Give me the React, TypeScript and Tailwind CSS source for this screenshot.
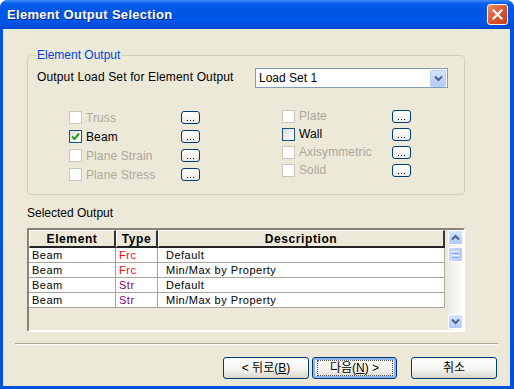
import React from "react"

const font = "font-['Liberation_Sans',Arial,sans-serif]"
const krFont = "font-['Liberation_Sans','Noto_Sans_CJK_KR',sans-serif]"

const leftItems = [
  { label: "Truss", state: "disabled" },
  { label: "Beam", state: "checked" },
  { label: "Plane Strain", state: "disabled" },
  { label: "Plane Stress", state: "disabled" },
]

const rightItems = [
  { label: "Plate", state: "disabled" },
  { label: "Wall", state: "enabled" },
  { label: "Axisymmetric", state: "disabled" },
  { label: "Solid", state: "disabled" },
]

const rows = [
  { element: "Beam", type: "Frc", desc: "Default" },
  { element: "Beam", type: "Frc", desc: "Min/Max by Property" },
  { element: "Beam", type: "Str", desc: "Default" },
  { element: "Beam", type: "Str", desc: "Min/Max by Property" },
]

function Chevron({ up = false }: { up?: boolean }) {
  return (
    <svg width="9" height="7" viewBox="0 0 9 7">
      <polyline
        points={up ? "1,5.5 4.5,2 8,5.5" : "1,1.5 4.5,5 8,1.5"}
        fill="none"
        stroke="#4D6185"
        strokeWidth="2"
      />
    </svg>
  )
}

function CheckBox({ state }: { state: string }) {
  if (state === "disabled") {
    return <div className="h-[13px] w-[13px] shrink-0 border border-[#CAC8BB] bg-white" />
  }
  return (
    <div className="flex h-[13px] w-[13px] shrink-0 items-center justify-center border border-[#1C5180] bg-[linear-gradient(135deg,#DCDCD7,#FFFFFF)]">
      {state === "checked" && (
        <svg width="9" height="9" viewBox="0 0 9 9">
          <polyline points="1,4.5 3.5,7 8,1.5" fill="none" stroke="#21A121" strokeWidth="2" />
        </svg>
      )}
    </div>
  )
}

function DotsButton() {
  return (
    <div className="flex h-[13px] w-[19px] shrink-0 items-end justify-center gap-[2px] rounded-[3px] border border-[#003C74] bg-[linear-gradient(to_bottom,#FFFFFF,#ECEBE6)] pb-[2px]">
      <div className="h-px w-px bg-black" />
      <div className="h-px w-px bg-black" />
      <div className="h-px w-px bg-black" />
    </div>
  )
}

function CheckRow({ label, state, rowH, labelW }: { label: string; state: string; rowH: string; labelW: string }) {
  return (
    <div className={`flex items-center ${rowH}`}>
      <div className={`flex items-center gap-[4px] ${labelW}`}>
        <CheckBox state={state} />
        <span className={`text-[12px] leading-none tracking-[0.1px] ${state === "disabled" ? "text-[#ACA899]" : "text-black"}`}>
          {label}
        </span>
      </div>
      <DotsButton />
    </div>
  )
}

function XPButton({ children, focused = false }: { children: React.ReactNode; focused?: boolean }) {
  return (
    <div
      className={`flex h-[22px] items-center justify-center rounded-[3px] border border-[#003C74] bg-[linear-gradient(to_bottom,#FFFFFF,#F3F2EE_60%,#D8D4CA)] text-[12px] text-black ${
        focused ? "shadow-[inset_0_0_0_2px_#8FB1EE]" : ""
      } ${krFont}`}
    >
      {focused ? (
        <div className="flex h-[16px] w-[76px] items-center justify-center border border-dotted border-[#555]">
          {children}
        </div>
      ) : (
        children
      )}
    </div>
  )
}

export default function App() {
  return (
    <div className={`h-[389px] w-[514px] bg-white ${font}`}>
      <div className="flex h-full w-full flex-col rounded-t-[8px] bg-[linear-gradient(to_bottom,#0055E5,#0050DF)]">
        {/* Title bar */}
        <div className="flex h-[29px] items-center justify-between rounded-t-[8px] bg-[linear-gradient(to_bottom,#3D8EFA_0%,#0A5EEC_12%,#0055E5_35%,#0058E8_70%,#0049D6_100%)] pl-[7px] pr-[6px]">
          <span className="text-[13px] font-bold tracking-[0.3px] text-white [text-shadow:1px_1px_0_#0C2A8A]">
            Element Output Selection
          </span>
          <div className="flex h-[21px] w-[21px] items-center justify-center rounded-[3px] border border-white bg-[linear-gradient(135deg,#EE8B66,#D9532B_55%,#C23D18)]">
            <svg width="11" height="11" viewBox="0 0 11 11">
              <path d="M1.5 1.5 L9.5 9.5 M9.5 1.5 L1.5 9.5" stroke="white" strokeWidth="2.2" strokeLinecap="square" />
            </svg>
          </div>
        </div>

        {/* Client area */}
        <div className="mb-[3px] ml-[3px] mr-[4px] flex flex-1 flex-col bg-[#ECE9D8]">
          {/* Element Output group */}
          <div className="relative ml-[24px] mt-[26px] h-[140px] w-[438px] rounded-[4px] border border-[#D0D0BF]">
            <span className="absolute left-[8px] top-[-8px] bg-[#ECE9D8] px-[1px] text-[12px] leading-[14px] text-[#0046D5]">
              Element Output
            </span>

            <div className="ml-[9px] mt-[12px] flex items-center">
              <span className="w-[218px] pb-[2px] text-[12px] tracking-[0.15px] text-black">Output Load Set for Element Output</span>
              <div className="flex h-[20px] w-[193px] items-center justify-between border border-[#7F9DB9] bg-white pl-[3px] pr-[1px]">
                <span className="text-[12px] text-black">Load Set 1</span>
                <div className="flex h-[17px] w-[16px] items-center justify-center rounded-[2px] border border-[#B9CDF6] bg-[linear-gradient(to_bottom,#D6E3FD,#B3C9F6)]">
                  <Chevron />
                </div>
              </div>
            </div>

            <div className="ml-[41px] mt-[19px] flex items-start">
              <div className="flex flex-col pt-[1px]">
                {leftItems.map((it) => (
                  <CheckRow key={it.label} label={it.label} state={it.state} rowH="h-[19px]" labelW="w-[112px]" />
                ))}
              </div>
              <div className="ml-[82px] flex flex-col">
                {rightItems.map((it) => (
                  <CheckRow key={it.label} label={it.label} state={it.state} rowH="h-[18px]" labelW="w-[110px]" />
                ))}
              </div>
            </div>
          </div>

          <div className="ml-[24px] mt-[11px] text-[12px] leading-[14px] text-black">Selected Output</div>

          {/* Output list */}
          <div className="ml-[24px] mt-[8px] flex h-[104px] w-[438px] border-2 border-b-white border-l-[#85837A] border-r-white border-t-[#85837A]">
            <div className="flex w-[419px] flex-col">
              <div className="flex h-[18px] text-[12px] font-bold tracking-[0.6px] text-black">
                <div className="flex w-[87px] items-center justify-center border-b-2 border-l border-r-2 border-t border-b-[#222] border-l-white border-r-[#333] border-t-white">
                  Element
                </div>
                <div className="flex w-[42px] items-center justify-center border-b-2 border-l border-r-2 border-t border-b-[#222] border-l-white border-r-[#333] border-t-white">
                  Type
                </div>
                <div className="flex w-[287px] items-center justify-center border-b-2 border-l border-r-2 border-t border-b-[#222] border-l-white border-r-[#333] border-t-white">
                  Description
                </div>
              </div>
              {rows.map((r, i) => (
                <div key={i} className="flex h-[15px] w-[416px] border-b border-[#A9A79C] bg-white text-[11px] tracking-[0.5px] leading-none">
                  <div className="flex w-[87px] items-center border-r border-[#A9A79C] pl-[3px] text-black">{r.element}</div>
                  <div
                    className={`flex w-[42px] items-center border-r border-[#A9A79C] pl-[3px] ${
                      r.type === "Frc" ? "text-[#FF0000]" : "text-[#800080]"
                    }`}
                  >
                    {r.type}
                  </div>
                  <div className="flex w-[287px] items-center border-r border-[#A9A79C] pl-[8px] text-black">{r.desc}</div>
                </div>
              ))}
            </div>

            {/* Scrollbar */}
            <div className="flex w-[15px] flex-col justify-between bg-[linear-gradient(to_right,#EEEDE5,#FCFCFA)]">
              <div className="flex flex-col gap-[2px]">
                <div className="flex h-[15px] w-[15px] items-center justify-center rounded-[2px] border border-white bg-[linear-gradient(to_bottom,#D6E3FD,#B3C9F6)]">
                  <Chevron up />
                </div>
                <div className="flex h-[15px] w-[15px] flex-col items-center justify-center gap-[1px] rounded-[2px] border border-white bg-[linear-gradient(to_right,#C8D8FB,#B6CBF7)]">
                  <div className="h-px w-[7px] bg-[#EEF4FE]" />
                  <div className="h-px w-[7px] bg-[#8DA9E6]" />
                  <div className="h-px w-[7px] bg-[#EEF4FE]" />
                  <div className="h-px w-[7px] bg-[#8DA9E6]" />
                </div>
              </div>
              <div className="mb-[1px] flex h-[15px] w-[15px] items-center justify-center rounded-[2px] border border-white bg-[linear-gradient(to_bottom,#D6E3FD,#B3C9F6)]">
                <Chevron />
              </div>
            </div>
          </div>

          {/* Separator */}
          <div className="ml-[12px] mt-[11px] h-[2px] w-[483px] border-b border-t border-b-white border-t-[#ACA899]" />

          {/* Buttons */}
          <div className="mr-[13px] mt-[12px] flex justify-end">
            <div className="w-[86px]">
              <XPButton>
                &lt; 뒤로(<span className="underline">B</span>)
              </XPButton>
            </div>
            <div className="ml-[3px] w-[85px]">
              <XPButton focused>
                다음(<span className="underline">N</span>) &gt;
              </XPButton>
            </div>
            <div className="ml-[14px] w-[86px]">
              <XPButton>취소</XPButton>
            </div>
          </div>
        </div>
      </div>
    </div>
  )
}
